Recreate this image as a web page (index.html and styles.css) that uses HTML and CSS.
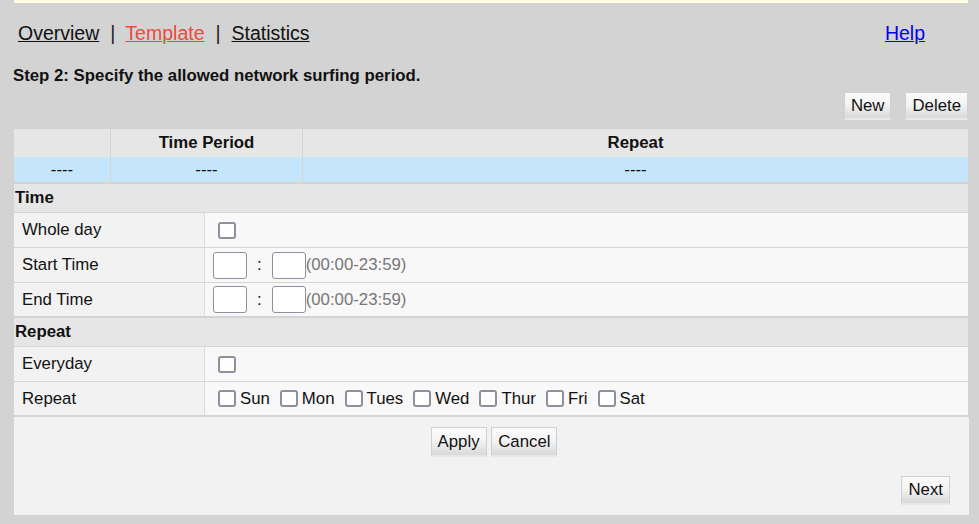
FILE: index.html
```html
<!DOCTYPE html>
<html>
<head>
<meta charset="utf-8">
<link rel="stylesheet" href="styles.css">
</head>
<body>
<div class="page">
  <div class="topbar"></div>
  <nav class="nav">
    <div class="tabs">
      <a class="tab" href="#">Overview</a><span class="sep">|</span><a class="tab active" href="#">Template</a><span class="sep">|</span><a class="tab" href="#">Statistics</a>
    </div>
    <a class="help" href="#">Help</a>
  </nav>
  <h2 class="step">Step 2: Specify the allowed network surfing period.</h2>
  <div class="toolbar">
    <button class="btn">New</button>
    <button class="btn">Delete</button>
  </div>
  <div class="list">
    <div class="list-row head">
      <div class="c c1"></div>
      <div class="c c2">Time Period</div>
      <div class="c c3">Repeat</div>
    </div>
    <div class="list-row data">
      <div class="c c1">----</div>
      <div class="c c2">----</div>
      <div class="c c3">----</div>
    </div>
  </div>
  <div class="group">
    <div class="section">Time</div>
    <div class="row">
      <div class="label">Whole day</div>
      <div class="value"><input type="checkbox" class="cb"></div>
    </div>
    <div class="row">
      <div class="label">Start Time</div>
      <div class="value"><input type="text" class="tin"><span class="colon">:</span><input type="text" class="tin"><span class="hint">(00:00-23:59)</span></div>
    </div>
    <div class="row">
      <div class="label">End Time</div>
      <div class="value"><input type="text" class="tin"><span class="colon">:</span><input type="text" class="tin"><span class="hint">(00:00-23:59)</span></div>
    </div>
  </div>
  <div class="group">
    <div class="section">Repeat</div>
    <div class="row">
      <div class="label">Everyday</div>
      <div class="value"><input type="checkbox" class="cb"></div>
    </div>
    <div class="row">
      <div class="label">Repeat</div>
      <div class="value days">
        <label class="day"><input type="checkbox" class="cb">Sun</label>
        <label class="day"><input type="checkbox" class="cb">Mon</label>
        <label class="day"><input type="checkbox" class="cb">Tues</label>
        <label class="day"><input type="checkbox" class="cb">Wed</label>
        <label class="day"><input type="checkbox" class="cb">Thur</label>
        <label class="day"><input type="checkbox" class="cb">Fri</label>
        <label class="day"><input type="checkbox" class="cb">Sat</label>
      </div>
    </div>
  </div>
  <div class="footer">
    <div class="actions">
      <button class="btn big">Apply</button>
      <button class="btn big">Cancel</button>
    </div>
    <div class="next-wrap">
      <button class="btn next">Next</button>
    </div>
  </div>
</div>
</body>
</html>
```

FILE: styles.css
```css
* { box-sizing: border-box; }
html, body { margin: 0; padding: 0; }
body {
  background: #d3d3d3;
  font-family: "Liberation Sans", Arial, sans-serif;
  font-size: 16.8px;
  color: #111;
  height: 524px;
  overflow: hidden;
}
.page {
  padding: 0 11px 0 14px;
}
.topbar {
  height: 3px;
  background: #fffde0;
}
.nav {
  display: flex;
  justify-content: space-between;
  align-items: center;
  margin-top: 19px;
  height: 22px;
  line-height: 22px;
  font-size: 19.5px;
  padding: 0 43px 0 4px;
}
.tab { color: #111; text-decoration: underline; }
.tab.active { color: #e84c3d; }
.sep { margin: 0 10px 0 11px; color: #222; }
.sep + .tab.active + .sep { margin-right: 11px; }
.help { color: #0000ee; text-decoration: underline; }
.step {
  margin: 22px 0 0 -1px;
  font-size: 16.8px;
  font-weight: bold;
  line-height: 20px;
  color: #111;
}
.toolbar {
  display: flex;
  justify-content: flex-end;
  gap: 14px;
  margin-top: 6px;
}
.btn {
  font-family: "Liberation Sans", Arial, sans-serif;
  font-size: 16.8px;
  color: #111;
  height: 28px;
  padding: 0 6px;
  border: 1px solid #d0d0d0;
  border-bottom: 2px solid #e8e8e8;
  background: linear-gradient(#fbfbfb, #f4f4f4 45%, #d9d9d9);
  border-radius: 0;
}
.btn.big { height: 30px; padding: 0 6px; }
.btn.next { height: 29px; padding: 0 6px; }
.list {
  margin-top: 9px;
  border-bottom: 2px solid #d3d3d3;
}
.list-row {
  display: grid;
  grid-template-columns: 96px 192px 1fr;
  text-align: center;
}
.list-row .c + .c { border-left: 1px solid #d3d3d3; }
.list-row.head {
  height: 28px;
  line-height: 28px;
  background: #e6e6e6;
  font-weight: bold;
}
.list-row.data {
  height: 25px;
  line-height: 25px;
  background: #c5e5fb;
}
.group {
  border-bottom: 2px solid #d3d3d3;
}
.section {
  height: 28px;
  line-height: 28px;
  background: #e6e6e6;
  font-weight: bold;
  padding-left: 1px;
}
.row {
  display: grid;
  grid-template-columns: 191px 1fr;
  height: 35px;
  border-top: 1px solid #d6d6d6;
}
.row:last-child { height: 34px; }
.label {
  background: #f2f2f2;
  border-right: 1px solid #dcdcdc;
  padding-left: 8px;
  display: flex;
  align-items: center;
}
.value {
  background: #f8f8f8;
  display: flex;
  align-items: center;
  padding-left: 13px;
}
.cb {
  appearance: none;
  -webkit-appearance: none;
  width: 18px;
  height: 17px;
  margin: 0;
  border: 2px solid #8f8f9d;
  border-radius: 3px;
  background: #fff;
}
.tin {
  width: 34px;
  height: 27px;
  margin: 0;
  border: 1px solid #8f8f9d;
  border-radius: 3px;
  background: #fff;
}
.value .tin:first-child { margin-left: -5px; }
.colon { margin: 0 10px 0 10px; }
.hint { color: #777; }
.day {
  display: inline-flex;
  align-items: center;
  gap: 4px;
  margin-right: 10px;
}
.footer {
  background: #f2f2f2;
  width: 955px;
  height: 98px;
  padding-top: 10px;
}
.actions {
  text-align: center;
  padding-left: 5px;
}
.next-wrap {
  display: flex;
  justify-content: flex-end;
  padding-right: 19px;
  margin-top: 19px;
}
```
